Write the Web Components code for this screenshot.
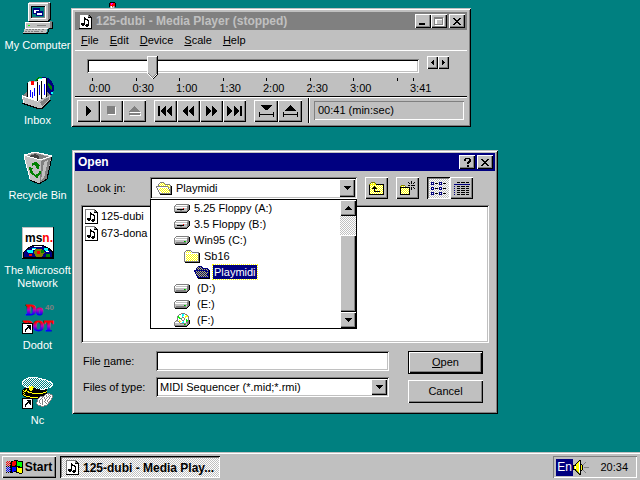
<!DOCTYPE html>
<html lang="en">
<head>
<meta charset="utf-8">
<title>Desktop</title>
<style>
  html, body { margin: 0; height: 100%; }
  body { font: 11px/13px "Liberation Sans", Arial, sans-serif; color: #000; background: #008080; overflow: hidden; }
</style>
</head>
<body>
<w95-desktop>
  <desktop-icon icon="computer">My Computer</desktop-icon>
  <desktop-icon icon="inbox">Inbox</desktop-icon>
  <desktop-icon icon="bin">Recycle Bin</desktop-icon>
  <desktop-icon icon="msn">The Microsoft Network</desktop-icon>
  <desktop-icon icon="dodot">Dodot</desktop-icon>
  <desktop-icon icon="nc">Nc</desktop-icon>
  <media-player slot="windows"></media-player>
  <open-dialog slot="windows"></open-dialog>
  <task-bar slot="bar"></task-bar>
</w95-desktop>

<script>
const PALETTE = { K:'#000', W:'#fff', G:'#808080', C:'#c0c0c0', N:'#000080', B:'#0000ff', R:'#ff0000', E:'#00ff00', D:'#008000', O:'#808000', F:'#ffff00', A:'#00ffff', T:'#008080', M:'#ff00ff' };
// Each dither letter alternates two colours in a checkerboard.
const dither = { Y:['#ffff00','#ffffff'], P:['#000080','#c0c060'], Q:['#008080','#ffffff'], S:['#c0c0c0','#ffffff'] };
function pixels(rows) {
  const w = Math.max(...rows.map(r => r.length)), h = rows.length, paths = {};
  rows.forEach((row, y) => [...row].forEach((ch, x) => {
    const c = dither[ch] ? dither[ch][(x + y) & 1] : PALETTE[ch];
    if (c) paths[c] = (paths[c] || '') + `M${x} ${y}h1v1h-1z`;
  }));
  return svg(w, h, Object.entries(paths).map(([c, d]) => `<path fill="${c}" d="${d}"/>`).join(''));
}
function svg(w, h, inner) {
  return `<svg width="${w}" height="${h}" viewBox="0 0 ${w} ${h}" shape-rendering="crispEdges" aria-hidden="true">${inner}</svg>`;
}
const shortcut = '<path fill="#fff" d="M0 21h11v11H0z"/><path d="M0 21h11v1H1v9H0zM10 21h1v11H0v-1h10zM4 23h5v5h-1v-1h-1v-1H6v1H5v1H4v2H3v-3h1v-1h1v-1h1v-1H5v-1H4z"/>';
const ICONS = {
  note: pixels([
    'GGGGGGGGGG...',
    'GWWWWWWWWGK..',
    'GWWWWWWWWGGK.',
    'GWWWWKWWWKKKK',
    'GWWWWKKWWWWWK',
    'GWWWWKKKKWWWK',
    'GWWWWKWWKKWWK',
    'GWWWWKWWWKWWK',
    'GWWWWKWWWKWWK',
    'GWKKKKWWWKWWK',
    'GWKKKKWKKKWWK',
    'GWWKKWKKKKWWK',
    'GWWWWWWKKWWWK',
    'GWWWWWWWWWWWK',
    'KKKKKKKKKKKKK']),
  floppy: pixels([
    '..GGGGGGGGGGGGG.',
    '.GWWWWWWWWWWWCGK',
    'GCCCCCCCCCCCCGGK',
    'GWWWWWWWWWWWWGGK',
    'GCCCCCCCCRCCCGGK',
    'GCCKKKKKKKCCCGGK',
    'GCCCCCGGCCCCCGK.',
    'GGGGGGGGGGGGGK..',
    '.KKKKKKKKKKKK...']),
  drive: pixels([
    '..GGGGGGGGGGGGG.',
    '.GWWWWWWWWWWWCGK',
    'GWCCCCCCCCCCCGGK',
    'GWWWWWWWWWWWWGGK',
    'GCCCCCCCCCCCCGGK',
    'GCCCCCCCCCDECGGK',
    'GCGGGGGGGGGGCGK.',
    'GGGGGGGGGGGGGK..',
    '.KKKKKKKKKKKK...']),
  cd: pixels([
    '.......GGGG.....',
    '.....GGWAAWGG...',
    '....GWWWAAWWFG..',
    '...GEWWWAWWFFFG.',
    '...GEEWWGGWFWWG.',
    '...GWEEGWWGWWWG.',
    '...GWWWGWWGWEWG.',
    '..GGWFWWGGWWEEGK',
    '.GCCGFFWWAWWEGGK',
    'GWWWWGWWAAWWGGGK',
    'GCCCCCGGGGGGCGGK',
    'GCCCCCCCCCDECGK.',
    'GGGGGGGGGGGGGK..',
    '.KKKKKKKKKKKK...']),
  folder: pixels([
    '..GGGGG.........',
    '.GYYYYYG........',
    'GYYYYYYYGGGGGGG.',
    'GWWWWWWWWWWWWWGK',
    'GWYYYYYYYYYYYYGK',
    'GWYYYYYYYYYYYYGK',
    'GWYYYYYYYYYYYYGK',
    'GWYYYYYYYYYYYYGK',
    'GWYYYYYYYYYYYYGK',
    'GWYYYYYYYYYYYYGK',
    'GWYYYYYYYYYYYYGK',
    'GGGGGGGGGGGGGGGK',
    '.KKKKKKKKKKKKKKK']),
  folderOpen: pixels([
    '....GGGG........',
    '...GYYYYG.......',
    '..GYYYYYYGGGGG..',
    '..GYYYYYYYYYYYG.',
    'GGGGGGGGGGGGYYGK',
    'GWWWWWWWWWWWGYGK',
    '.GWYYYYYYYYYGYGK',
    '.GWYYYYYYYYYYGGK',
    '..GWYYYYYYYYYGGK',
    '..GWYYYYYYYYYYGK',
    '...GWYYYYYYYYYGK',
    '...GGGGGGGGGGGGK',
    '....KKKKKKKKKKKK']),
  folderSelected: pixels([
    '....NNNN........',
    '...NPPPPN.......',
    '..NPPPPPPNNNNN..',
    '..NPPPPPPPPPPPN.',
    'NNNNNNNNNNNNPPNK',
    'NPPPPPPPPPPPNPNK',
    '.NPPPPPPPPPPNPNK',
    '.NPPPPPPPPPPPNNK',
    '..NPPPPPPPPPPNNK',
    '..NPPPPPPPPPPPNK',
    '...NPPPPPPPPPPNK',
    '...NNNNNNNNNNNNK',
    '....KKKKKKKKKKKK']),
  up: pixels([
    '..OOOO.........',
    '.OYYYYO........',
    'OFFFFFFKKKKKKKK',
    'KYYYYYYYYYYYYYK',
    'KYYYYKYYYYYYYYK',
    'KYYYKKKYYYYYYYK',
    'KYYKKKKKYYYYYYK',
    'KYYYYKYYYYYYYYK',
    'KYYYYKYYYYYYYYK',
    'KYYYYKKKKKKYYYK',
    'KYYYYYYYYYYYYYK',
    'KYYYYYYYYYYYYYK',
    'KKKKKKKKKKKKKKK']),
  newFolder: pixels([
    '...........K...',
    '........K..K..K',
    '.........K.K.K.',
    '...............',
    '.OOOO...KK.KKKK',
    'OYYYYO.........',
    'KKKKKKKKKK.K.K.',
    'KYYYYYYYYK.K..K',
    'KYYYYYYYYK.K...',
    'KYYYYYYYYK.....',
    'KYYYYYYYYK.....',
    'KYYYYYYYYK.....',
    'KYYYYYYYYK.....',
    'KKKKKKKKKK.....']),
  list: pixels([
    'NNN.....NNN.....',
    'NWN.KKK.NWN.KKK.',
    'NNN.....NNN.....',
    '................',
    '................',
    'NNN.....NNN.....',
    'NWN.KKK.NWN.KKK.',
    'NNN.....NNN.....',
    '................',
    '................',
    'NNN.....NNN.....',
    'NWN.KKK.NWN.KKK.',
    'NNN.....NNN.....']),
  details: pixels([
    '...KKK.KKKK.KKK.',
    '................',
    'NNNNNNNNNNNNNNNN',
    '................',
    'N..KKK.KKKK.KKK.',
    '................',
    'N..KKK.KKKK.KKK.',
    '................',
    'N..KKK.KKKK.KKK.',
    '................',
    'N..KKK.KKKK.KKK.',
    '................',
    'N..KKK.KKKK.KKK.']),
  flag: pixels([
    '........KKKK.....',
    '.R.R.KKRRRKEKKKKK',
    'R.R.RKRRRRKEEEEEK',
    '.R.RKKRRRRKEEEEEK',
    'R.R.RKRRRRKEEEEEK',
    '.R.RKKRRRKKEEEEEK',
    'K.K.KKKKKKKKKKEEK',
    '.B.BKKBBBBKFKKKKK',
    'B.B.BKBBBBKFFFFFK',
    '.B.BKKBBBBKFFFFFK',
    'B.B.BKBBBBKFFFFFK',
    '.B.BKKBBKKKFFFFFK',
    'K.K.KKK...KKKFFFK',
    '.............KKK.']),
  speaker: pixels([
    '......KK........',
    '.....KFK........',
    '....KFWK....G...',
    '...KFFWK...G....',
    '..KFFFWKK.G.....',
    'KKKFFFWKFK......',
    'KFWFFFWKFK......',
    'KFWFFFWKFK.GGGGG',
    'KFWFFFWKFK......',
    'KKKFFFWKFK......',
    '..KOFFWKK.G.....',
    '...KOFWK...G....',
    '....KOWK....G...',
    '.....KOK........',
    '......KK........']),
  play: svg(6, 10, '<path d="M0 0h1v1h1v1h1v1h1v1h1v2h-1v1h-1v1h-1v1h-1v1H0z"/>'),
  stop: svg(9, 9, '<path fill="#fff" d="M1 1h8v8H1z"/><path fill="#808080" d="M0 0h8v8H0z"/>'),
  eject: svg(12, 10, '<path fill="#fff" d="M6 1h1v1h1v1h1v1h1v1h1v1h1v1H1V6h1V5h1V4h1V3h1V2h1zM1 8h11v2H1z"/><path fill="#808080" d="M5 0h1v1h1v1h1v1h1v1h1v1h1v1H0V5h1V4h1V3h1V2h1V1h1zM0 7h11v2H0z"/>'),
  first: svg(15, 10, '<path d="M0 0h2v10H0zM8 0v10H7V9H6V8H5V7H4V6H3V4h1V3h1V2h1V1h1V0zM14 0v10h-1V9h-1V8h-1V7h-1V6H9V4h1V3h1V2h1V1h1V0z"/>'),
  rewind: svg(11, 10, '<path d="M5 0v10H4V9H3V8H2V7H1V6H0V4h1V3h1V2h1V1h1V0zM11 0v10h-1V9H9V8H8V7H7V6H6V4h1V3h1V2h1V1h1V0z"/>'),
  forward: svg(11, 10, '<path d="M0 0h1v1h1v1h1v1h1v1h1v2H4v1H3v1H2v1H1v1H0zM6 0h1v1h1v1h1v1h1v1h1v2h-1v1H9v1H8v1H7v1H6z"/>'),
  last: svg(15, 10, '<path d="M0 0h1v1h1v1h1v1h1v1h1v2H4v1H3v1H2v1H1v1H0zM7 0h1v1h1v1h1v1h1v1h1v2h-1v1h-1v1H9v1H8v1H7zM13 0h2v10h-2z"/>'),
  markIn: svg(15, 12, '<path d="M2 0h11v1h-1v1h-1v1h-1v1H9v1H6V4H5V3H4V2H3V1H2zM0 7h1v2h13V7h1v5h-1v-2H1v2H0z"/>'),
  markOut: svg(15, 12, '<path d="M7 0h1v1h1v1h1v1h1v1h1v1h1v1H2V5h1V4h1V3h1V2h1V1h1zM0 7h1v2h13V7h1v5h-1v-2H1v2H0z"/>'),
  left: svg(3, 5, '<path d="M2 0h1v5H2V4H1V3H0V2h1V1h1z"/>'),
  right: svg(3, 5, '<path d="M0 0h1v1h1v1h1v1H2v1H1v1H0z"/>'),
  down: svg(7, 4, '<path d="M0 0h7v1H6v1H5v1H4v1H3V3H2V2H1V1H0z"/>'),
  upArrow: svg(7, 4, '<path d="M3 0h1v1h1v1h1v1h1v1H0V3h1V2h1V1h1z"/>'),
  min: svg(8, 8, '<path d="M0 6h6v2H0z"/>'),
  max: svg(10, 9, '<path fill="#fff" d="M1 1h9v8H1zM3 3v5h6V3z" fill-rule="evenodd"/><path fill="#808080" d="M0 0h9v8H0zM1 2v5h7V2z" fill-rule="evenodd"/>'),
  close: svg(8, 7, '<path d="M0 0h2v1h1v1h2V1h1V0h2v1H7v1H6v1H5v1h1v1h1v1h1v1H6V6H5V5H3v1H2v1H0V6h1V5h1V4h1V3H2V2H1V1H0z"/>'),
  help: svg(7, 9, '<path d="M1 0h5v1h1v3H6v1H5v1H3V4h1V3h1V1H2v2H0V1h1zM3 7h2v2H3z"/>'),
  beacon: pixels(['.KKKKK.','KRMMRRK','KRMRRRK','KRRRRRK','KCWRCGK','.CWCCG.']),
  computer: svg(32, 32, `
    <path fill="#c0c0c0" d="M6 1h20v18H6z"/><path fill="#fff" d="M6 1h20v1H7v17H6zM26 0h2v1h-2z"/><path fill="#c0c0c0" d="M8 0h20l-2 1H6z"/>
    <path fill="#808080" d="M26 1h2v16h-1v1h-1z"/><path d="M28 1h1v17h-1v1h-1v1H7v-1h19v-1h1v-1h1z"/>
    <path fill="#808080" d="M9 4h14v12H9z"/><path d="M9 4h14v1H10v11H9z"/><path fill="#008080" d="M10 5h12v10H10z"/><path fill="#fff" d="M23 4h1v13H9v-1h14z"/>
    <path fill="#000080" d="M11 6h7v6h-7z"/><path fill="#fff" d="M12 8h5v3h-5z"/><path fill="#000080" d="M14 9h7v5h-7z"/><path fill="#fff" d="M15 11h5v2h-5z"/>
    <path fill="#c0c0c0" d="M3 20h25v6H3z"/><path fill="#fff" d="M3 20h25v1H4v5H3z"/><path fill="#00ff00" d="M6 23h2v1H6z"/><path fill="#808080" d="M15 23h9v1h-9zM28 19h2v7h-2zM4 26h24v1H4z"/><path d="M30 20h1v7h-3v-1h2z"/>
    <path fill="#c0c0c0" d="M3 26h23l-2 5H1z"/><path fill="#fff" d="M3 26h23v1H3z"/>
    <path fill="#808080" d="M4 27h2v1H4zM7 27h2v1H7zM10 27h2v1h-2zM13 27h2v1h-2zM16 27h2v1h-2zM20 27h2v1h-2zM3 29h2v1H3zM6 29h2v1H6zM9 29h2v1H9zM12 29h5v1h-5zM19 29h2v1h-2z"/><path d="M1 31h24l2-5h1l-2 6H1z"/>`),
  inbox: svg(32, 32, `
    <circle cx="21" cy="11" r="11" fill="#000080"/><path fill="#008000" d="M12 4l5-4 5 1 3 4-3 4-5 2-4 3zM26 6l4 3v5l-3-3zM22 16l5 2-4 3z"/>
    <path fill="#00ffff" d="M17 1h4v1h-4zM29 15h2v2h-2z"/>
    <path fill="#808080" d="M0 19l6-5h18l5 5-10 13h-3L1 26z"/>
    <path fill="#fff" d="M16 2l8-1v20h-8z"/><path d="M24 1h1v21h-1zM15 3h1v20h-1z"/><path fill="#fff" d="M11 4h8v20h-8z"/><path d="M19 4h1v21h-1z"/><path fill="#c0c0c0" d="M5 6l3-2h8v1H8v20H5z"/><path fill="#fff" d="M6 5h9v23H6z"/><path d="M15 5h1v23h-1zM5 6h1v17H5z"/>
    <path fill="#ff0000" d="M9 4h3v4H9z"/><path fill="#0000ff" d="M8 13h1v7H8zM10 15h1v6h-1zM12 11h1v8h-1zM17 8h1v10h-1zM22 7h1v11h-1z"/>
    <path fill="#fff" d="M0 18l16 6v7L1 26z"/><path fill="#c0c0c0" d="M1 20l15 5v6L2 26zM16 24l12-6v5l-9 8h-3z"/><path fill="#808080" d="M18 25l9-5v3l-7 6z"/>
    <path d="M0 26h1l15 5h3l9-8h1v1l-9 8h-5L0 27z"/>`),
  bin: svg(32, 32, `
    <path fill="#c0c0c0" d="M2 3L13 0l17 4-5 23-8 5-9-4z"/>
    <path fill="#808080" d="M4 4l9-3 15 4-10 3z"/><path fill="#404040" d="M7 4l6-2 4 2v4z"/><path fill="#808080" d="M19 9l10-4-4 22-7 5z"/><path fill="#c0c0c0" d="M22 10l4-2-4 18-3 2z"/>
    <path fill="none" stroke="#fff" d="M2 3L13 0l17 4-12 4zM2 4l6 23"/>
    <path fill="none" stroke="#000" d="M30 5l-5 22-8 5-9-4"/>
    <path fill="#008000" d="M10 11l4-1 3 3 1-1-1 5-4-1 1-1-2-2-2 1zM7 15l4 1-1 1 1 4 2 1v2l-4-2-2-5zM18 17l1 4-3 4-1 2-3-3 3-3v1l2-1z"/>`),
  msn: svg(32, 32, `
    <path fill="#fff" d="M0 0h32v32H0z"/><path fill="none" stroke="#000" d="M31 0v31H0"/><path fill="none" stroke="#c0c0c0" d="M0 31V0h31"/>
    <path d="M1 31v-6l4-4 6-3h10l6 3 4 4v6z"/><path fill="#000080" d="M2 30v-5l4-3 5-3h10l6 4 3 3v4z"/>
    <path fill="#00ffff" d="M5 23h5v-2h4v2h-3v3H6zM22 21h4v3h-3z"/><path fill="#fff" d="M12 19h8v1h-8zM10 22h3v1h-3zM24 24h3v1h-3z"/><path fill="#808000" d="M13 22h6l4 3-3 5h-6l-2-4z"/><path fill="#ff0000" d="M15 24h3v3h-3zM7 27h3v2H7z"/><path fill="#008000" d="M19 23h3v3h-3zM24 27h4v3h-4z"/>
    <text x="3" y="15" font-family="Liberation Sans" font-weight="700" font-size="12">ms<tspan fill="#f00">n.</tspan></text>`),
  dodot: svg(32, 32, `
    <defs><linearGradient id="a" gradientUnits="userSpaceOnUse" x1="0" y1="2" x2="0" y2="14"><stop offset=".2" stop-color="#f00"/><stop offset=".5" stop-color="#c000c0"/><stop offset=".9" stop-color="#00f"/></linearGradient>
    <linearGradient id="b" gradientUnits="userSpaceOnUse" x1="0" y1="18" x2="0" y2="30"><stop offset=".2" stop-color="#f00"/><stop offset=".5" stop-color="#c000c0"/><stop offset=".9" stop-color="#00f"/></linearGradient></defs>
    <g font-family="Liberation Serif" font-weight="700" stroke-width="1"><text x="4" y="13" font-size="14" fill="url(#a)" stroke="url(#a)">Do</text><text x="1" y="29" font-size="14" fill="url(#b)" stroke="url(#b)">DOT</text></g>
    <text x="23" y="8" font-family="Liberation Sans" font-size="8" font-weight="700" fill="#808080">40</text>${shortcut}`),
  nc: (() => {
    const cap = pixels([
      '......WWWWWWWWWW................',
      '....WWQQQQQQQQQQWWWW............',
      '..WWQQQQQQQQQQQQQQQQWWWW........',
      '.WQQQQQQQQQQQQQQQQQQQQQQWW......',
      'WQQQQQQQQQQQQQQQQQQQQQQQQQWWW...',
      'WQQQQQQQQQQQQQQQQQQQQQQQQQQQQW..',
      'WQQQQQQQQQQQQQQQQQQQQQQQQQQQQQW.',
      'WQQQQQQQQQQQQQQQQQQQQQQQQQQQQQW.',
      '.WQQQQQQQQQQQQQQQQQQQQQQQQQQQQW.',
      '..WWQQQFQFFQQQQQQQQQQQQQQQQQQW..',
      '....WWWFFFFFQQQQQQQQQQQQQQQWW...',
      '..KKKKKFFFFKKKQQQQQQQQQWWW......',
      '.KKKFKKFFFFKKKKKKKWWWWWKK.......',
      'KFKFFKKKFFKKKKKKKKKKKKKKK.......',
      'KKFFKFFKKKKKKKKKKKKKKKKKF.......',
      'KFKKKKFFFFKKKKKKKKKKKFFFK.......',
      'KKFKKKKKKKFFFFFFFFFFFKKKKGGG....',
      'KFKKKKKKKKKKKKKKKKKKKKKGWWGWGG..',
      '.KFFKKKKKKKKKKKKKKKKKKGWGWWGWWG.',
      '..KKFFFFKKKKKKKKKKGGGGWWGWGWGWG.',
      '....KKKKFFFFFFFFKGWWGWGWWGWGWWG.',
      '........KKKKKKKKGWWGWWGWGWWGWG..',
      '...............GWWGWGWWGWWGWWG..',
      '...............GWGWWGWWGWGWWG...',
      '...............GWGWWGWGWWGWG....',
      '..............GWWGWWGWWGWWGG....',
      '..............GWWWGWGWWWGWG.....',
      '...............GWWWWGWWWWG......',
      '................GGGWWWGGG.......',
      '...................GGG..........']);
    return svg(32, 32, cap + shortcut);
  })(),
};

const BASE = `
  *, *::before { box-sizing: border-box; }
  svg { display: block; flex: none; overflow: visible; }
  button, input, select { font: inherit; color: inherit; margin: 0; padding: 0; border: 0; border-radius: 0; background: #c0c0c0; outline: none; }
  button { display: flex; align-items: center; justify-content: center; }
  .raised { background: #c0c0c0; box-shadow: inset 1px 1px #fff, inset -1px -1px #000, inset -2px -2px #808080; }
  .sunken { background: #fff; box-shadow: inset 1px 1px #808080, inset -1px -1px #fff, inset 2px 2px #000, inset -2px -2px #c0c0c0; }
  .well { box-shadow: inset 1px 1px #808080, inset -1px -1px #fff; }
  .dither { background: repeating-conic-gradient(#fff 0 25%, #c0c0c0 0 50%) 0 0 / 2px 2px; }
`;
function define(name, css, html) {
  customElements.define(name, class extends HTMLElement {
    constructor() {
      super();
      const t = document.createElement('template');
      t.innerHTML = `<style>${BASE}${css}</style>${typeof html === 'function' ? html(this) : html}`;
      this.attachShadow({ mode: 'open' }).append(t.content.cloneNode(true));
    }
  });
}

define('w95-icon', ':host { display: block; flex: none; }', el => ICONS[el.getAttribute('name')] || '');

define('w95-desktop', `
  :host { display: flex; flex-direction: column; height: 100vh; background: #008080; }
  main { position: relative; flex: 1; min-height: 0; }
  .icons { display: grid; grid-auto-rows: 75px; width: 75px; padding-top: 2px; }
  .beacon { position: absolute; left: 109px; top: 2px; }
`, `<main><div class="icons"><slot></slot></div><w95-icon class="beacon" name="beacon"></w95-icon><slot name="windows"></slot></main><slot name="bar"></slot>`);

define('desktop-icon', `
  :host { display: flex; flex-direction: column; align-items: center; gap: 5px; color: #fff; text-align: center; min-width: 0; }
  span { width: 100%; }
`, el => `${ICONS[el.getAttribute('icon')]}<span><slot></slot></span>`);

define('w95-window', `
  :host { display: block; padding: var(--frame, 3px); background: #c0c0c0; box-shadow: inset 1px 1px #c0c0c0, inset -1px -1px #000, inset 2px 2px #fff, inset -2px -2px #808080; }
  header { display: flex; align-items: center; gap: 4px; height: 18px; padding: 0 2px 0 var(--title-pad, 3px); background: var(--title-bg, #000080); color: var(--title-fg, #fff); }
  h1 { flex: 1; margin: 0; font: 700 12px/18px "Liberation Sans", Arial, sans-serif; white-space: nowrap; overflow: hidden; }
  .buttons { display: flex; gap: 2px; }
`, `<header><slot name="icon"></slot><h1><slot name="title"></slot></h1><div class="buttons"><slot name="buttons"></slot></div></header><slot></slot>`);

define('media-player', `
  :host { position: absolute; left: 71px; right: 169px; top: 8px; }
  w95-window { --frame: 4px; --title-pad: 4px; --title-bg: #808080; --title-fg: #c0c0c0; }
  .cap { width: 16px; height: 14px; }
  .pair { display: flex; }
  nav { display: flex; gap: 11px; height: 21px; padding: 0 6px; align-items: center; border-bottom: 1px solid #fff; font-size: 11px; }
  nav button { background: none; }
  .scale { padding-top: 3px; height: 46px; border-bottom: 1px solid #000; }
  .slide { display: flex; padding: 0 18px 0 12px; gap: 8px; }
  .slide .pair { padding-top: 2px; }
  .slide .pair button { width: 11px; height: 13px; }
  input { -webkit-appearance: none; appearance: none; flex: 1; min-width: 0; height: 23px; background: none; }
  input::-webkit-slider-runnable-track { height: 14px; background: #fff; box-shadow: inset 1px 1px #808080, inset -1px -1px #fff, inset 2px 2px #000, inset -2px -2px #c0c0c0; }
  input::-webkit-slider-thumb { -webkit-appearance: none; width: 11px; height: 23px; margin-top: -3px; border: 0;
    background: url("data:image/svg+xml,%3Csvg xmlns='http://www.w3.org/2000/svg' width='11' height='23' shape-rendering='crispEdges'%3E%3Cpath d='M0 0h11v18l-5 5h-1l-5-5z' fill='%23000'/%3E%3Cpath d='M0 0h10v18l-5 5-5-5z' fill='%23fff'/%3E%3Cpath d='M1 1h9v17l-5 4-4-4z' fill='%23808080'/%3E%3Cpath d='M1 1h8v16l-4 4-4-4z' fill='%23c0c0c0'/%3E%3C/svg%3E"); }
  .ticks { display: grid; grid-template-columns: repeat(7, minmax(0, 58fr)) minmax(0, 22fr) 1px; padding: 1px 53px 0 17px; }
  .ticks span { display: block; white-space: nowrap; }
  .ticks span::before { content: ""; display: block; width: 1px; height: 3px; background: #000; }
  .ticks b { display: block; font-weight: 400; margin: 1px 0 0 -3px; }
  .bar { display: flex; align-items: center; height: 26px; padding: 0 3px 0 2px; border-top: 1px solid #fff; }
  .bar button { width: 23px; height: 22px; }
  .bar .gap { margin-left: 8px; }
  .bar .wide { width: 24px; }
  .rule { align-self: stretch; width: 2px; margin: 0 4px 0 6px; border-left: 1px solid #000; border-right: 1px solid #fff; }
  output { flex: 1; height: 19px; padding: 0 4px; line-height: 19px; }
`, `
  <w95-window>
    <w95-icon slot="icon" name="note"></w95-icon><span slot="title">125-dubi - Media Player (stopped)</span>
    <div class="pair" slot="buttons"><button class="raised cap" aria-label="Minimize">${ICONS.min}</button><button class="raised cap" aria-label="Maximize" disabled>${ICONS.max}</button></div>
    <button slot="buttons" class="raised cap" aria-label="Close">${ICONS.close}</button>
    <nav><button><span><u>F</u>ile</span></button><button><span><u>E</u>dit</span></button><button><span><u>D</u>evice</span></button><button><span><u>S</u>cale</span></button><button><span><u>H</u>elp</span></button></nav>
    <div class="scale">
      <div class="slide"><input type="range" min="0" max="221" value="41" aria-label="Position"><div class="pair"><button class="raised" aria-label="Scroll back">${ICONS.left}</button><button class="raised" aria-label="Scroll forward">${ICONS.right}</button></div></div>
      <div class="ticks">${['0:00','0:30','1:00','1:30','2:00','2:30','3:00','','3:41'].map(t => `<span><b>${t}</b></span>`).join('')}</div>
    </div>
    <div class="bar">
      <button class="raised" aria-label="Play">${ICONS.play}</button><button class="raised" aria-label="Stop" disabled>${ICONS.stop}</button><button class="raised" aria-label="Eject" disabled>${ICONS.eject}</button>
      <button class="raised gap" aria-label="Previous mark">${ICONS.first}</button><button class="raised" aria-label="Rewind">${ICONS.rewind}</button><button class="raised" aria-label="Fast forward">${ICONS.forward}</button><button class="raised" aria-label="Next mark">${ICONS.last}</button>
      <button class="raised wide gap" aria-label="Start selection">${ICONS.markIn}</button><button class="raised wide" aria-label="End selection">${ICONS.markOut}</button>
      <span class="rule"></span><output class="well">00:41 (min:sec)</output>
    </div>
  </w95-window>`);

define('drop-row', `
  :host { display: flex; align-items: center; gap: 4px; height: 16px; padding-left: calc(23px + var(--level, 0) * 10px); white-space: pre; }
  .icon { width: 16px; display: flex; justify-content: center; }
  .label { padding: 0 1px; margin-left: -1px; line-height: 14px; }
  :host([aria-selected=true]) .label { background: #000080; color: #fff; outline: 1px dotted #ffff00; outline-offset: 0; }
`, el => `<span class="icon">${ICONS[el.getAttribute('icon')]}</span><span class="label"><slot></slot></span>`);

define('open-dialog', `
  :host { position: absolute; left: 72px; right: 142px; top: 150px; }
  .cap { width: 16px; height: 14px; }
  form { padding: 6px 6px 8px; }
  .look { display: flex; align-items: center; padding: 0 16px 0 6px; }
  .look > label { width: 63px; }
  .combo { position: relative; flex: 1; min-width: 0; display: grid; height: 22px; }
  .combo > * { grid-area: 1 / 1; }
  select { appearance: none; width: 100%; height: 100%; padding: 0 20px 0 4px; }
  .combo .with-icon { padding-left: 26px; }
  .combo > svg { align-self: center; margin-left: 6px; z-index: 1; pointer-events: none; }
  .arrow { justify-self: end; align-self: stretch; display: flex; align-items: center; justify-content: center; width: 16px; margin: 2px; pointer-events: none; z-index: 1; }
  .tool { width: 23px; height: 22px; margin-left: 8px; }
  .tool.join { margin-left: 0; }
  .tool.on { box-shadow: inset 1px 1px #000, inset -1px -1px #fff, inset 2px 2px #808080; padding: 1px 0 0 1px; }
  .popup { position: absolute; z-index: 2; left: 0; right: 0; top: 22px; display: flex; border: 1px solid #000; background: #fff; }
  .rows { flex: 1; }
  .scroll { display: flex; flex-direction: column; width: 16px; }
  .scroll button { height: 16px; }
  .scroll .track { flex: 1; display: flex; flex-direction: column; padding-top: 19px; }
  .scroll .thumb { flex: 1; }
  .files { display: flex; flex-direction: column; flex-wrap: wrap; align-content: flex-start; height: 138px; margin: 6px 0 0; padding: 3px 4px; list-style: none; }
  .files li { display: flex; align-items: center; gap: 3px; height: 17px; }
  .foot { display: flex; gap: 19px; padding: 8px 6px 0 2px; }
  .fields { flex: 1; display: grid; grid-template-columns: 73px minmax(0, 1fr); grid-auto-rows: 20px; gap: 6px 0; align-items: center; }
  .fields input { width: 100%; height: 100%; padding: 0 4px; background: #fff; }
  .fields .combo { height: 20px; }
  .actions { display: flex; flex-direction: column; gap: 6px; }
  .actions button { width: 75px; height: 23px; }
  .default { box-shadow: inset 0 0 0 1px #000, inset 2px 2px #fff, inset -2px -2px #000, inset -3px -3px #808080; }
`, `
  <w95-window>
    <span slot="title">Open</span>
    <button slot="buttons" class="raised cap" aria-label="Help">${ICONS.help}</button><button slot="buttons" class="raised cap" aria-label="Close">${ICONS.close}</button>
    <form onsubmit="return false">
      <div class="look">
        <label for="look">Look <u>i</u>n:</label>
        <div class="combo">
          <select id="look" class="sunken with-icon"><option>Playmidi</option></select>${ICONS.folderOpen}<span class="raised arrow">${ICONS.down}</span>
          <div class="popup">
            <div class="rows" role="listbox" aria-label="Folders">
              <drop-row role="option" icon="floppy">5.25 Floppy (A:)</drop-row>
              <drop-row role="option" icon="floppy">3.5 Floppy (B:)</drop-row>
              <drop-row role="option" icon="drive">Win95 (C:)</drop-row>
              <drop-row role="option" icon="folder" style="--level:1">Sb16</drop-row>
              <drop-row role="option" icon="folderSelected" style="--level:2" aria-selected="true">Playmidi</drop-row>
              <drop-row role="option" icon="drive"> (D:)</drop-row>
              <drop-row role="option" icon="drive"> (E:)</drop-row>
              <drop-row role="option" icon="cd"> (F:)</drop-row>
            </div>
            <div class="scroll"><button type="button" class="raised" aria-label="Scroll up">${ICONS.upArrow}</button><div class="track dither"><div class="thumb raised"></div></div><button type="button" class="raised" aria-label="Scroll down">${ICONS.down}</button></div>
          </div>
        </div>
        <button type="button" class="raised tool" aria-label="Up one level">${ICONS.up}</button><button type="button" class="raised tool" aria-label="New folder">${ICONS.newFolder}</button>
        <button type="button" class="tool on dither" aria-label="List" aria-pressed="true">${ICONS.list}</button><button type="button" class="raised tool join" aria-label="Details">${ICONS.details}</button>
      </div>
      <ul class="files sunken"><li>${ICONS.note}125-dubi</li><li>${ICONS.note}673-dona</li></ul>
      <div class="foot">
        <div class="fields">
          <label for="name">File <u>n</u>ame:</label><input id="name" class="sunken" type="text">
          <label for="type">Files of <u>t</u>ype:</label><div class="combo"><select id="type" class="sunken"><option>MIDI Sequencer (*.mid;*.rmi)</option></select><span class="raised arrow">${ICONS.down}</span></div>
        </div>
        <div class="actions"><button class="default"><span><u>O</u>pen</span></button><button type="button" class="raised">Cancel</button></div>
      </div>
    </form>
  </w95-window>`);

define('task-bar', `
  :host { display: flex; align-items: flex-start; gap: 4px; height: 28px; padding: 4px 3px 0 2px; background: #c0c0c0; box-shadow: inset 0 1px #c0c0c0, inset 0 2px #fff; box-sizing: border-box; }
  button { height: 22px; font: 700 12px/14px "Liberation Sans", Arial, sans-serif; }
  .start { width: 54px; gap: 2px; }
  .task { width: 160px; gap: 4px; justify-content: flex-start; padding: 1px 0 0 6px; white-space: nowrap; box-shadow: inset 1px 1px #000, inset -1px -1px #fff, inset 2px 2px #808080; }
  .tray { display: flex; align-items: center; margin-left: auto; height: 22px; width: 84px; padding: 0 3px; }
  .lang { background: #000080; color: #fff; height: 17px; width: 17px; font-size: 12px; line-height: 17px; text-align: center; }
  time { flex: 1; text-align: right; padding-right: 6px; }
`, `
  <button class="raised start">${ICONS.flag}Start</button>
  <button class="task dither">${ICONS.note}125-dubi - Media Play...</button>
  <div class="tray well"><span class="lang">En</span>${ICONS.speaker}<time>20:34</time></div>`);
</script>
</body>
</html>
